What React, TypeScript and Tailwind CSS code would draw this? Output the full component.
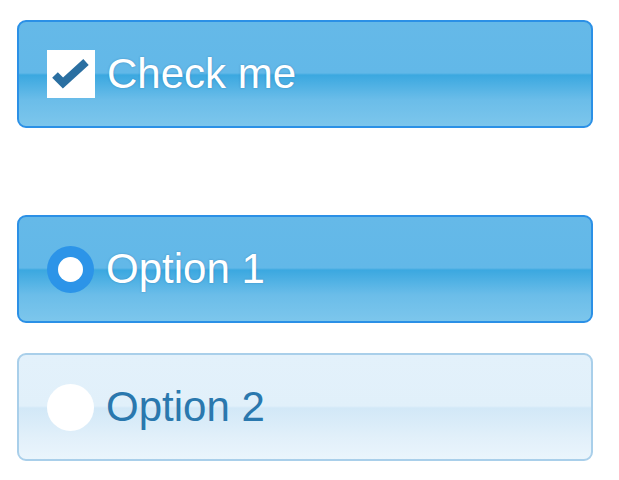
import * as React from 'react';

const active =
  'border-2 border-[#2b90e6] text-white bg-[linear-gradient(to_bottom,#65b9e8_0%,#62b8e8_49%,#3ba8e0_51%,#6bbde9_75%,#7cc6ec_100%)] [text-shadow:0_0_2px_rgba(0,60,120,0.35)]';
const idle =
  'border-2 border-[#a9cfea] text-[#2a78ae] bg-[linear-gradient(to_bottom,#e3f1fb_0%,#e1f0fa_49%,#d2e8f7_51%,#e2f0fa_80%,#eaf5fc_100%)]';

const Row: React.FC<{ on: boolean; children: React.ReactNode }> = ({ on, children }) => (
  <div
    className={`flex items-center h-[108px] w-[576px] rounded-[9px] pl-[28px] gap-3 text-[42px] leading-none ${
      on ? active : idle
    }`}
  >
    {children}
  </div>
);

export default function App() {
  return (
    <div className="min-h-[480px] bg-white pt-5 pl-[17px] flex flex-col font-['Liberation_Sans',Arial,sans-serif]">
      <Row on>
        <span className="w-12 h-12 bg-white flex items-center justify-center shrink-0">
          <svg width="48" height="48" viewBox="0 0 48 48">
            <polyline
              points="8,25 16,33 39,12"
              fill="none"
              stroke="#2a6fa1"
              strokeWidth="8"
              strokeLinejoin="miter"
            />
          </svg>
        </span>
        <span>Check me</span>
      </Row>

      <div className="mt-[87px] flex flex-col gap-[30px]">
        <Row on>
          <span className="w-[47px] h-[47px] rounded-full bg-[#2c94e8] flex items-center justify-center shrink-0">
            <span className="w-[25px] h-[25px] rounded-full bg-white" />
          </span>
          <span>Option 1</span>
        </Row>
        <Row on={false}>
          <span className="w-[47px] h-[47px] rounded-full bg-white shrink-0" />
          <span>Option 2</span>
        </Row>
      </div>
    </div>
  );
}
